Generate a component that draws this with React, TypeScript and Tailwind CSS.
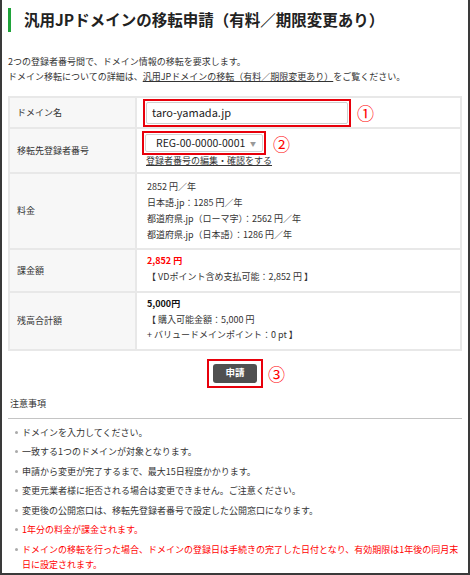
import React from 'react'

const notes: { text: string; red?: boolean }[] = [
  { text: 'ドメインを入力してください。' },
  { text: '一致する1つのドメインが対象となります。' },
  { text: '申請から変更が完了するまで、最大15日程度かかります。' },
  { text: '変更元業者様に拒否される場合は変更できません。ご注意ください。' },
  { text: '変更後の公開窓口は、移転先登録者番号で設定した公開窓口になります。' },
  { text: '1年分の料金が課金されます。', red: true },
  {
    text: 'ドメインの移転を行った場合、ドメインの登録日は手続きの完了した日付となり、有効期限は1年後の同月末日に設定されます。',
    red: true,
  },
]

function Label({ children }: { children: React.ReactNode }) {
  return (
    <div className="flex items-center bg-[#f7f7f7] border-r-2 border-[#e8e8e8] pl-[7px] text-[9px] text-[#333]">
      {children}
    </div>
  )
}

export default function App() {
  return (
    <div className="w-[470px] h-[575px] overflow-hidden bg-white border-x-2 border-b-2 border-[#3a3a3a] px-[6px] font-['Noto_Sans_CJK_JP','Noto_Sans',sans-serif] text-[#333]">
      {/* Title */}
      <div className="mt-[8px] h-[24px] flex items-center border-l-[3px] border-[#1fa33a] pl-[13px] text-[15.5px] font-bold text-[#222] leading-none">
        汎用JPドメインの移転申請（有料／期限変更あり）
      </div>

      {/* Intro */}
      <div className="mt-[22px] text-[9px] leading-[15px]">
        <p>2つの登録者番号間で、ドメイン情報の移転を要求します。</p>
        <p>
          ドメイン移転についての詳細は、
          <span className="underline">汎用JPドメインの移転（有料／期限変更あり）</span>
          をご覧ください。
        </p>
      </div>

      {/* Form table */}
      <div className="mt-[12px] border-2 border-[#e8e8e8]">
        {/* Domain */}
        <div className="grid grid-cols-[127px_1fr] h-[29px]">
          <Label>ドメイン名</Label>
          <div className="flex items-center pl-[6px]">
            <div className="border-2 border-[#e8000b] p-[1px]">
              <div className="w-[202px] h-[22px] border border-[#cfcfcf] rounded-[2px] flex items-center pl-[5px] text-[11px] text-[#222]">
                taro-yamada.jp
              </div>
            </div>
            <span className="ml-[6px] text-[17px] leading-none text-[#f00]">①</span>
          </div>
        </div>

        {/* Registrant */}
        <div className="grid grid-cols-[127px_1fr] h-[45px] border-t-2 border-[#e8e8e8]">
          <Label>移転先登録者番号</Label>
          <div className="pl-[5px] pt-[2px]">
            <div className="flex items-center">
              <div className="border-2 border-[#e8000b] p-[1px]">
                <div className="w-[118px] h-[18px] border border-[#d2d2d2] rounded-[2px] flex items-center pl-[10px] pr-[6px] text-[10.5px] text-[#222]">
                  <span>REG-00-0000-0001</span>
                  <span className="ml-auto text-[6px] text-[#999]">▼</span>
                </div>
              </div>
              <span className="ml-[7px] text-[17px] leading-none text-[#f00]">②</span>
            </div>
            <div className="pl-[4px] text-[9px] leading-[12px] underline">登録者番号の編集・確認をする</div>
          </div>
        </div>

        {/* Fee */}
        <div className="grid grid-cols-[127px_1fr] border-t-2 border-[#e8e8e8]">
          <Label>料金</Label>
          <div className="pl-[10px] pt-[5px] pb-[5px] text-[9px] leading-[16px]">
            <p>2852 円／年</p>
            <p>日本語.jp：1285 円／年</p>
            <p>都道府県.jp（ローマ字）：2562 円／年</p>
            <p>都道府県.jp（日本語）：1286 円／年</p>
          </div>
        </div>

        {/* Charge */}
        <div className="grid grid-cols-[127px_1fr] border-t-2 border-[#e8e8e8]">
          <Label>課金額</Label>
          <div className="pl-[10px] pt-[3px] pb-[6px] text-[9px] leading-[16px]">
            <p className="font-bold text-[#f00]">2,852 円</p>
            <p>【 VDポイント含め支払可能：2,852 円 】</p>
          </div>
        </div>

        {/* Balance */}
        <div className="grid grid-cols-[127px_1fr] border-t-2 border-[#e8e8e8]">
          <Label>残高合計額</Label>
          <div className="pl-[10px] pt-[3px] pb-[6px] text-[9px] leading-[15.5px]">
            <p className="font-bold text-[#111]">5,000円</p>
            <p>【 購入可能金額：5,000 円</p>
            <p>+ バリュードメインポイント：0 pt 】</p>
          </div>
        </div>
      </div>

      {/* Submit */}
      <div className="mt-[8px] flex justify-center">
        <div className="relative border-2 border-[#e8000b] px-[4px] py-[3px]">
          <button className="w-[44px] h-[19px] rounded-[3px] bg-[#505050] text-white text-[9.5px] font-bold leading-none flex items-center justify-center">
            申請
          </button>
          <span className="absolute left-full top-1/2 -translate-y-1/2 ml-[7px] text-[17px] leading-none text-[#f00]">③</span>
        </div>
      </div>

      {/* Notes */}
      <p className="mt-[8px] pl-[2px] text-[9px] leading-[15px]">注意事項</p>
      <div className="mt-[7px] h-px bg-[#c4c4c4]" />
      <ul className="mt-[6px] text-[9px] leading-[15px]">
        {notes.map((n) => (
          <li key={n.text} className={`flex mb-[4.5px] pl-[7px] ${n.red ? 'text-[#f00]' : ''}`}>
            <span className="shrink-0 mt-[6px] w-[3px] h-[3px] rounded-full bg-[#aaa]" />
            <span className="ml-[4px]">{n.text}</span>
          </li>
        ))}
      </ul>
    </div>
  )
}
